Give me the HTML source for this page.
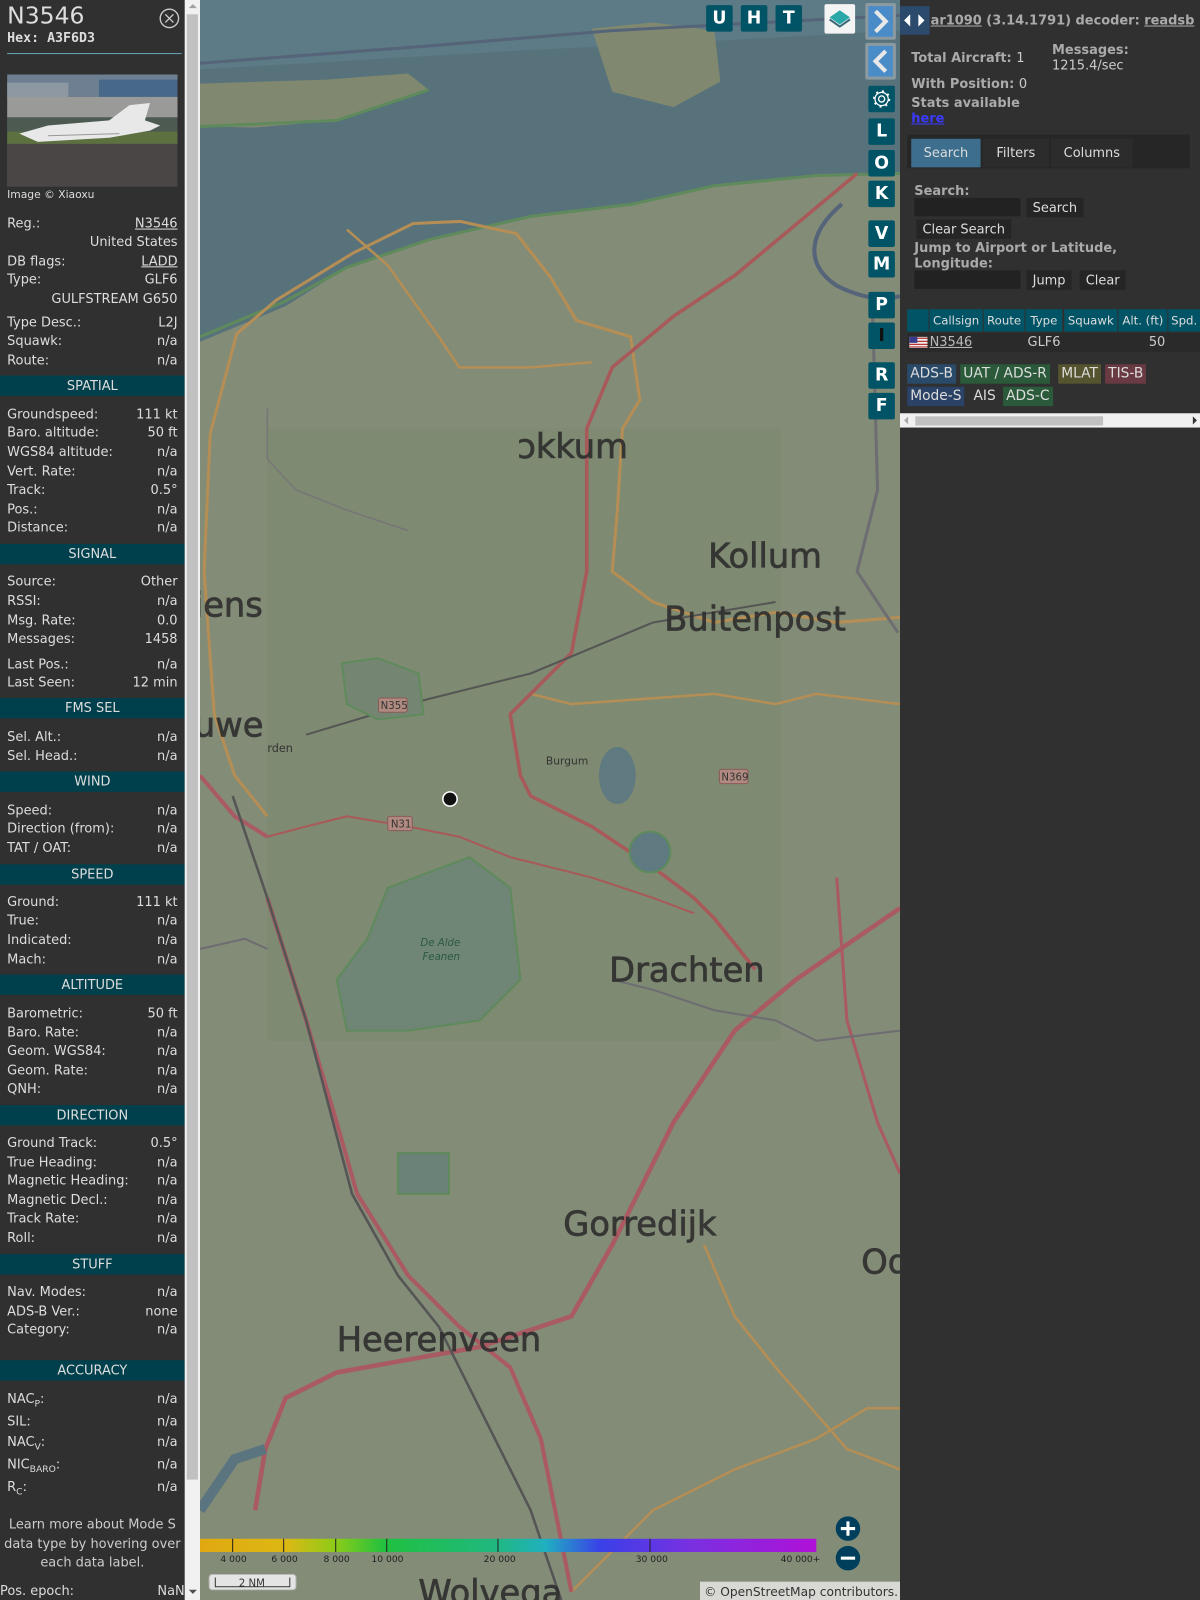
<!DOCTYPE html>
<html><head><meta charset="utf-8">
<style>
*{margin:0;padding:0;box-sizing:border-box}
html,body{width:1200px;height:1600px;overflow:hidden;background:#303030}
#w{position:absolute;left:0;top:0;width:1176px;height:1568px;transform:scale(1.020408);transform-origin:0 0;font-family:"DejaVu Sans","Liberation Sans",sans-serif;font-size:12.7px;color:#ddd}
.a{position:absolute}
#lp{left:0;top:0;width:181px;height:1568px;background:#303030;overflow:hidden}
.r{position:absolute;left:7px;width:167px;height:17px;line-height:17px;white-space:nowrap}
.r b{font-weight:normal;position:absolute;right:0;top:0}
.h{position:absolute;left:0;width:181px;height:20px;line-height:20px;background:#00404c;text-align:center}
u{text-decoration:underline}
#sb{left:181px;top:0;width:15px;height:1568px;background:#f1f1f1}
#map{left:196px;top:0;width:686px;height:1568px;background:#838c77;overflow:hidden}
.btn{position:absolute;width:26px;height:26px;background:#005466;color:#fff;font-weight:bold;font-size:17px;text-align:center;line-height:26px;border-radius:2px}
#rp{left:882px;top:0;width:294px;height:1568px;background:#303030}
.bt{position:absolute;background:#252525;color:#ddd;height:19px;line-height:19px;padding:0 6px;font-size:12.7px}
.inp{position:absolute;background:#222;height:18px;width:104px}
.th{position:absolute;top:303px;height:22px;line-height:22px;background:#005466;color:#ddd;text-align:center;font-size:11.5px}
.bd{position:absolute;height:19px;line-height:19px;padding:0 3px;font-size:13.5px}
.big{font-family:"DejaVu Sans",sans-serif;font-size:33px;fill:#2e2e2e;stroke:#2e2e2e;stroke-width:0.7;opacity:.9}
.sm{font-family:"DejaVu Sans",sans-serif;font-size:10px;fill:#333}
</style></head><body><div id="w">

<div id="lp" class="a">
 <div class="a" style="left:7px;top:3px;font-size:23px;color:#ddd">N3546</div>
 <div class="a" style="left:7px;top:30px;font-family:'DejaVu Sans Mono',monospace;font-weight:bold;font-size:13px">Hex: A3F6D3</div>
 <svg class="a" style="left:156px;top:8px" width="20" height="20"><circle cx="10" cy="10" r="9" fill="none" stroke="#ccc" stroke-width="1.3"/><path d="M6 6L14 14M14 6L6 14" stroke="#ccc" stroke-width="1.3"/></svg>
 <div class="a" style="left:7px;top:52px;width:171px;height:1px;background:#6aa6b8"></div>
 <svg class="a" style="left:7px;top:73px" width="167" height="110">
  <rect width="167" height="110" fill="#5b6066"/>
  <rect width="167" height="22" fill="#6d7f90"/>
  <rect y="8" x="0" width="60" height="16" fill="#8d98a3"/><rect y="5" x="90" width="77" height="18" fill="#48688a"/>
  <rect y="22" width="167" height="20" fill="#9a9a98"/>
  <rect y="42" width="167" height="14" fill="#4d5a52"/>
  <rect y="56" width="167" height="12" fill="#5d7040"/>
  <rect y="68" width="167" height="42" fill="#494645"/>
  <path d="M12 58 L40 50 L100 45 L120 30 L140 28 L135 45 L150 50 L140 55 L100 62 L30 66 Z" fill="#e8e8e8"/>
  <path d="M40 60 L110 58" stroke="#999" stroke-width="1"/>
 </svg>
 <div class="a" style="left:7px;top:185px;font-size:10.5px">Image © Xiaoxu</div>

 <div class="r" style="top:210px">Reg.:<b><u>N3546</u></b></div>
 <div class="r" style="top:228px"><b>United States</b></div>
 <div class="r" style="top:247px">DB flags:<b><u>LADD</u></b></div>
 <div class="r" style="top:265px">Type:<b>GLF6</b></div>
 <div class="r" style="top:284px"><b>GULFSTREAM G650</b></div>
 <div class="r" style="top:307px">Type Desc.:<b>L2J</b></div>
 <div class="r" style="top:325px">Squawk:<b>n/a</b></div>
 <div class="r" style="top:344px">Route:<b>n/a</b></div>
 <div class="h" style="top:368px">SPATIAL</div>
 <div class="r" style="top:397px">Groundspeed:<b>111 kt</b></div>
 <div class="r" style="top:415px">Baro. altitude:<b>50 ft</b></div>
 <div class="r" style="top:434px">WGS84 altitude:<b>n/a</b></div>
 <div class="r" style="top:453px">Vert. Rate:<b>n/a</b></div>
 <div class="r" style="top:471px">Track:<b>0.5°</b></div>
 <div class="r" style="top:490px">Pos.:<b>n/a</b></div>
 <div class="r" style="top:508px">Distance:<b>n/a</b></div>
 <div class="h" style="top:533px">SIGNAL</div>
 <div class="r" style="top:561px">Source:<b>Other</b></div>
 <div class="r" style="top:580px">RSSI:<b>n/a</b></div>
 <div class="r" style="top:599px">Msg. Rate:<b>0.0</b></div>
 <div class="r" style="top:617px">Messages:<b>1458</b></div>
 <div class="r" style="top:642px">Last Pos.:<b>n/a</b></div>
 <div class="r" style="top:660px">Last Seen:<b>12 min</b></div>
 <div class="h" style="top:684px">FMS SEL</div>
 <div class="r" style="top:713px">Sel. Alt.:<b>n/a</b></div>
 <div class="r" style="top:732px">Sel. Head.:<b>n/a</b></div>
 <div class="h" style="top:756px">WIND</div>
 <div class="r" style="top:785px">Speed:<b>n/a</b></div>
 <div class="r" style="top:803px">Direction (from):<b>n/a</b></div>
 <div class="r" style="top:822px">TAT / OAT:<b>n/a</b></div>
 <div class="h" style="top:847px">SPEED</div>
 <div class="r" style="top:875px">Ground:<b>111 kt</b></div>
 <div class="r" style="top:893px">True:<b>n/a</b></div>
 <div class="r" style="top:912px">Indicated:<b>n/a</b></div>
 <div class="r" style="top:931px">Mach:<b>n/a</b></div>
 <div class="h" style="top:955px">ALTITUDE</div>
 <div class="r" style="top:984px">Barometric:<b>50 ft</b></div>
 <div class="r" style="top:1003px">Baro. Rate:<b>n/a</b></div>
 <div class="r" style="top:1021px">Geom. WGS84:<b>n/a</b></div>
 <div class="r" style="top:1040px">Geom. Rate:<b>n/a</b></div>
 <div class="r" style="top:1058px">QNH:<b>n/a</b></div>
 <div class="h" style="top:1083px">DIRECTION</div>
 <div class="r" style="top:1111px">Ground Track:<b>0.5°</b></div>
 <div class="r" style="top:1130px">True Heading:<b>n/a</b></div>
 <div class="r" style="top:1148px">Magnetic Heading:<b>n/a</b></div>
 <div class="r" style="top:1167px">Magnetic Decl.:<b>n/a</b></div>
 <div class="r" style="top:1185px">Track Rate:<b>n/a</b></div>
 <div class="r" style="top:1204px">Roll:<b>n/a</b></div>
 <div class="h" style="top:1229px">STUFF</div>
 <div class="r" style="top:1257px">Nav. Modes:<b>n/a</b></div>
 <div class="r" style="top:1276px">ADS-B Ver.:<b>none</b></div>
 <div class="r" style="top:1294px">Category:<b>n/a</b></div>
 <div class="h" style="top:1333px">ACCURACY</div>
 <div class="r" style="top:1362px">NAC<sub style="font-size:9px">P</sub>:<b>n/a</b></div>
 <div class="r" style="top:1384px">SIL:<b>n/a</b></div>
 <div class="r" style="top:1404px">NAC<sub style="font-size:9px">V</sub>:<b>n/a</b></div>
 <div class="r" style="top:1426px">NIC<sub style="font-size:9px">BARO</sub>:<b>n/a</b></div>
 <div class="r" style="top:1448px">R<sub style="font-size:9px">C</sub>:<b>n/a</b></div>
 <div class="a" style="left:0;top:1485px;width:181px;text-align:center;line-height:18.5px;color:#ccc">Learn more about Mode S data type by hovering over each data label.</div>
 <div class="r" style="top:1550px;left:0;width:181px">Pos. epoch:<b>NaN</b></div>
</div>

<div id="sb" class="a">
 <div class="a" style="left:2px;top:14px;width:11px;height:1436px;background:#c1c1c1"></div>
 <div class="a" style="left:4px;top:4px;width:0;height:0;border-left:4px solid transparent;border-right:4px solid transparent;border-bottom:4px solid #a0a0a0"></div>
 <div class="a" style="left:4px;top:1558px;width:0;height:0;border-left:4px solid transparent;border-right:4px solid transparent;border-top:4px solid #505050"></div>
</div>

<div id="map" class="a">
<svg width="686" height="1568" viewBox="196 0 686 1568" style="position:absolute;left:0;top:0">
 <rect x="262" y="420" width="503" height="600" fill="#7e8a71"/>
 <path d="M196 0H882V170L800 172L700 182L620 200L520 212L420 235L340 262L280 300L196 335Z" fill="#57727b"/>
 <path d="M196 0H882V30L700 40L500 50L300 62L196 68Z" fill="#5d7b86"/>
 <path d="M196 82L320 78L400 72L420 88L330 118L250 125L196 124Z" fill="#80896f"/>
 <path d="M580 28L640 22L700 30L706 80L660 105L600 90Z" fill="#80896f"/>
 <path d="M196 330L280 295L340 262L420 235L520 212L620 200L700 182L800 172L882 170" fill="none" stroke="#5f8a5c" stroke-width="3"/>
 <path d="M196 124L330 118L420 88" fill="none" stroke="#5f8a5c" stroke-width="3"/>
 <path d="M196 62L420 45L600 30L882 15" fill="none" stroke="#56647a" stroke-width="3"/>
 <path d="M825 200C790 230 790 260 820 280C860 300 882 290 882 290" fill="none" stroke="#56647a" stroke-width="4"/>
 <path d="M206 425L232 327L271 294L346 248L405 219L451 217L506 229L539 271L565 314L618 330L627 392L610 420L605 500L600 560L640 590L700 610L760 600L820 610L882 605" fill="none" stroke="#b48e55" stroke-width="3"/>
 <path d="M206 425L200 560L210 700L230 760L262 800" fill="none" stroke="#b48e55" stroke-width="3"/>
 <path d="M340 225L380 260L430 330L450 360L520 360L580 355" fill="none" stroke="#b48e55" stroke-width="2.5"/>
 <path d="M520 680L560 690L700 680L760 690L800 680L882 690" fill="none" stroke="#b48e55" stroke-width="2.5"/>
 <path d="M690 1220L720 1290L760 1340L830 1420L882 1440" fill="none" stroke="#b48e55" stroke-width="2.5"/>
 <path d="M560 1560L640 1480L720 1440L800 1410L850 1380L882 1380" fill="none" stroke="#b48e55" stroke-width="2.5"/>
 <path d="M840 170L780 220L720 270L660 310L600 360L575 420L575 560L560 640L520 680L500 700L510 760L520 780L580 810L640 850L680 880L700 900L740 950" fill="none" stroke="#a85a5a" stroke-width="3.5"/>
 <path d="M882 890L780 960L720 1010L660 1100L600 1220L560 1290L470 1320L330 1345L280 1370L260 1420L250 1480" fill="none" stroke="#aa5a62" stroke-width="4.5"/>
 <path d="M196 760L230 800L262 820" fill="none" stroke="#aa5a62" stroke-width="4"/>
 <path d="M262 820L300 810L340 800L400 810L450 820L500 840L580 860L640 880L680 895" fill="none" stroke="#a85a5a" stroke-width="2"/>
 <path d="M262 400L262 450L290 480L340 500L400 520" fill="none" stroke="#777" stroke-width="1.5"/>
 <path d="M262 880L300 1000L330 1100L350 1170L400 1250L450 1300L500 1340L530 1410L560 1560" fill="none" stroke="#aa5a62" stroke-width="4"/>
 <path d="M820 860L830 1000L860 1100L882 1150" fill="none" stroke="#aa5a62" stroke-width="3"/>
 <path d="M228 780L262 880L300 1000L345 1170L390 1250L430 1300L470 1380L520 1480L550 1568" fill="none" stroke="#555" stroke-width="2.5"/>
 <path d="M300 720L400 690L520 660L640 610L760 590" fill="none" stroke="#555" stroke-width="2"/>
 <path d="M855 300L860 480L840 560L880 620" fill="none" stroke="#6e6e72" stroke-width="3"/>
 <path d="M196 930L240 920L262 930" fill="none" stroke="#6e6e72" stroke-width="2"/>
 <path d="M600 960L640 970L700 990L760 1000L800 1020L882 1010" fill="none" stroke="#6e6e72" stroke-width="2"/>
 <path d="M196 1480L230 1430L260 1420" fill="none" stroke="#5b7580" stroke-width="10"/>
 <ellipse cx="605" cy="760" rx="18" ry="28" fill="#5f7a80"/>
 <ellipse cx="637" cy="835" rx="20" ry="20" fill="#5f7a80" stroke="#5f8a5c" stroke-width="2"/>
 <path d="M380 870L420 855L460 840L500 870L510 960L470 1000L400 1010L340 1010L330 960L360 920Z" fill="#6f8576" stroke="#5f8a5c" stroke-width="2"/>
 <path d="M335 650L370 645L410 660L415 700L370 705L340 690Z" fill="#748672" stroke="#5f8a5c" stroke-width="2"/>
 <path d="M390 1130L440 1130L440 1170L390 1170Z" fill="#6a8278" stroke="#5f8a5c" stroke-width="2"/>
 <text x="507" y="449" class="big">ɔkkum</text>
 <text x="694" y="556" class="big">Kollum</text>
 <text x="651" y="618" class="big">Buitenpost</text>
 <text x="190" y="604" class="big">iens</text>
 <text x="190" y="722" class="big">uwe</text>
 <text x="597" y="962" class="big">Drachten</text>
 <text x="552" y="1211" class="big">Gorredijk</text>
 <text x="330" y="1324" class="big">Heerenveen</text>
 <text x="410" y="1572" class="big">Wolvega</text>
 <text x="844" y="1248" class="big">Od</text>
 <rect x="262" y="720" width="30" height="16" fill="#7e8a71"/>
 <text x="262" y="737" class="sm" style="font-size:11px">rden</text>
 <text x="535" y="749" class="sm" style="font-size:10.5px">Burgum</text>
 <rect x="371" y="684" width="28" height="14" rx="2" fill="#b08a80" stroke="#8a5a5a"/><text x="373" y="695" class="sm">N355</text>
 <rect x="380" y="800" width="24" height="14" rx="2" fill="#b08a80" stroke="#8a5a5a"/><text x="383" y="811" class="sm">N31</text>
 <rect x="705" y="754" width="28" height="14" rx="2" fill="#b08a80" stroke="#8a5a5a"/><text x="707" y="765" class="sm">N369</text>
 <text x="412" y="927" class="sm" style="font-style:italic;fill:#2d5a40">De Alde</text>
 <text x="414" y="941" class="sm" style="font-style:italic;fill:#2d5a40">Feanen</text>
 <circle cx="441" cy="783" r="7" fill="#111" stroke="#fff" stroke-width="1.5"/>
 <defs><linearGradient id="cg" x1="0" x2="1">
  <stop offset="0" stop-color="#e0a810"/><stop offset="0.14" stop-color="#dcb814"/><stop offset="0.22" stop-color="#8ccc18"/><stop offset="0.3" stop-color="#20c040"/><stop offset="0.48" stop-color="#20b880"/><stop offset="0.56" stop-color="#20b0c0"/><stop offset="0.65" stop-color="#3a40e8"/><stop offset="0.8" stop-color="#7a30e0"/><stop offset="1" stop-color="#b010d8"/>
 </linearGradient></defs>
 <rect x="196" y="1508" width="604" height="13" fill="url(#cg)"/>
 <g stroke="#222" stroke-width="1"><path d="M228 1508v13M278 1508v13M329 1508v13M379 1508v13M488 1508v13M637 1508v13"/></g>
 <g class="sm" style="font-size:9px;fill:#222"><text x="216" y="1531">4 000</text><text x="266" y="1531">6 000</text><text x="317" y="1531">8 000</text><text x="364" y="1531">10 000</text><text x="474" y="1531">20 000</text><text x="623" y="1531">30 000</text><text x="765" y="1531">40 000+</text></g>
 <rect x="205" y="1543" width="85" height="15" rx="3" fill="#e4e4e4" stroke="#bbb"/>
 <path d="M211 1546v9h73v-9" fill="none" stroke="#333"/>
 <text x="234" y="1555" class="sm" style="font-size:10px">2 NM</text>
 <circle cx="831" cy="1498" r="12" fill="#003f5c"/><path d="M824 1498h14M831 1491v14" stroke="#fff" stroke-width="3"/>
 <circle cx="831" cy="1527" r="12" fill="#003f5c"/><path d="M824 1527h14" stroke="#fff" stroke-width="3"/>
 <rect x="686" y="1550" width="196" height="18" fill="#d8d8d4"/>
 <text x="690" y="1564" class="sm" style="font-size:12px;fill:#333">© OpenStreetMap contributors.</text>
</svg>
 <div class="btn" style="left:496px;top:5px">U</div>
 <div class="btn" style="left:530px;top:5px">H</div>
 <div class="btn" style="left:564px;top:5px">T</div>
 <div class="a" style="left:612px;top:4px;width:30px;height:29px;background:#f4f4f4;border-radius:2px">
  <svg width="30" height="29"><path d="M15 6L25 13L15 20L5 13Z" fill="#2aa8a8"/><path d="M5 15L15 22L25 15" fill="none" stroke="#3a6a7a" stroke-width="2"/></svg></div>
 <div class="a" style="left:652px;top:3px;width:30px;height:36px;background:#8a9aa0;border-radius:2px"><div class="a" style="left:3px;top:3px;width:24px;height:30px;background:#4a8cc8"><svg width="24" height="30"><path d="M7 5L17 15L7 25" fill="none" stroke="#e8e8e8" stroke-width="4"/></svg></div></div>
 <div class="a" style="left:652px;top:42px;width:30px;height:36px;background:#8a9aa0;border-radius:2px"><div class="a" style="left:3px;top:3px;width:24px;height:30px;background:#4a8cc8"><svg width="24" height="30"><path d="M17 5L7 15L17 25" fill="none" stroke="#e8e8e8" stroke-width="4"/></svg></div></div>
 <div class="btn" style="left:655px;top:84px"><svg width="26" height="26"><circle cx="13" cy="13" r="3" fill="none" stroke="#fff" stroke-width="1.3"/><circle cx="13" cy="13" r="6.5" fill="none" stroke="#fff" stroke-width="1.2"/><circle cx="13" cy="13" r="7.5" fill="none" stroke="#fff" stroke-width="2" stroke-dasharray="2 3.9"/></svg></div>
 <div class="btn" style="left:655px;top:116px">L</div>
 <div class="btn" style="left:655px;top:147px">O</div>
 <div class="btn" style="left:655px;top:177px">K</div>
 <div class="btn" style="left:655px;top:216px">V</div>
 <div class="btn" style="left:655px;top:246px">M</div>
 <div class="btn" style="left:655px;top:286px">P</div>
 <div class="btn" style="left:655px;top:316px;color:#111">I</div>
 <div class="btn" style="left:655px;top:355px">R</div>
 <div class="btn" style="left:655px;top:385px">F</div>
</div>

<div id="rp" class="a">
 <div class="a" style="left:0;top:6px;width:29px;height:28px;background:#2c4a6b"><svg width="29" height="28"><path d="M4 14L10 8V20Z M24 14L18 8V20Z" fill="#fff"/></svg></div>
 <div class="a" style="left:30px;top:12px;font-weight:bold;color:#aaa;font-size:12.7px;white-space:nowrap"><u>ar1090</u> (3.14.1791) decoder: <u>readsb</u></div>
 <div class="a" style="left:11px;top:49px;font-weight:bold;color:#aaa"> Total Aircraft: <span style="font-weight:normal;color:#ccc">1</span></div>
 <div class="a" style="left:149px;top:41px;font-weight:bold;color:#aaa">Messages:</div>
 <div class="a" style="left:149px;top:56px;color:#ccc">1215.4/sec</div>
 <div class="a" style="left:11px;top:74px;font-weight:bold;color:#aaa">With Position: <span style="font-weight:normal;color:#ccc">0</span></div>
 <div class="a" style="left:11px;top:93px;font-weight:bold;color:#aaa">Stats available</div>
 <div class="a" style="left:11px;top:108px;font-weight:bold;color:#3b3bff"><u>here</u></div>
 <div class="a" style="left:7px;top:132px;width:277px;height:33px;background:#262626"></div>
 <div class="a" style="left:11px;top:136px;width:68px;height:28px;background:#3d6e8e;line-height:28px;text-align:center">Search</div>
 <div class="a" style="left:81px;top:136px;width:65px;height:28px;background:#2c2c2c;line-height:28px;text-align:center">Filters</div>
 <div class="a" style="left:148px;top:136px;width:80px;height:28px;background:#2c2c2c;line-height:28px;text-align:center">Columns</div>
 <div class="a" style="left:14px;top:179px;font-weight:bold;color:#aaa">Search:</div>
 <div class="inp" style="left:14px;top:194px"></div>
 <div class="bt" style="left:124px;top:194px">Search</div>
 <div class="bt" style="left:16px;top:215px">Clear Search</div>
 <div class="a" style="left:14px;top:235px;font-weight:bold;color:#aaa;line-height:15px">Jump to Airport or Latitude,<br>Longitude:</div>
 <div class="inp" style="left:14px;top:265px"></div>
 <div class="bt" style="left:124px;top:265px">Jump</div>
 <div class="bt" style="left:176px;top:265px">Clear</div>
 <div class="th" style="left:7px;width:21px"></div>
 <div class="th" style="left:29px;width:52px">Callsign</div>
 <div class="th" style="left:82px;width:40px">Route</div>
 <div class="th" style="left:123px;width:36px">Type</div>
 <div class="th" style="left:161px;width:52px">Squawk</div>
 <div class="th" style="left:214px;width:48px">Alt. (ft)</div>
 <div class="th" style="left:263px;width:31px">Spd.</div>
 <div class="a" style="left:7px;top:326px;width:287px;height:19px;background:#2a2a2a"></div>
 <svg class="a" style="left:9px;top:330px" width="18" height="11"><rect width="18" height="11" fill="#eee"/><path d="M0 1.5h18M0 4.5h18M0 7.5h18M0 10h18" stroke="#b33" stroke-width="1.2"/><rect width="8" height="6" fill="#3b3b8b"/></svg>
 <div class="a" style="left:29px;top:327px;color:#bbb"><u>N3546</u></div>
 <div class="a" style="left:125px;top:327px;color:#ccc">GLF6</div>
 <div class="a" style="left:240px;top:327px;color:#ccc;width:20px;text-align:right">50</div>
 <div class="bd" style="left:7px;top:357px;background:#2a4a6a">ADS-B</div>
 <div class="bd" style="left:59px;top:357px;background:#2a5a3a">UAT / ADS-R</div>
 <div class="bd" style="left:155px;top:357px;background:#56542f">MLAT</div>
 <div class="bd" style="left:201px;top:357px;background:#6a3a42">TIS-B</div>
 <div class="bd" style="left:7px;top:379px;background:#2a4266">Mode-S</div>
 <div class="bd" style="left:69px;top:379px">AIS</div>
 <div class="bd" style="left:101px;top:379px;background:#2a5a3a">ADS-C</div>
 <div class="a" style="left:0;top:405px;width:294px;height:14px;background:#f1f1f1"></div>
 <div class="a" style="left:15px;top:408px;width:184px;height:9px;background:#c1c1c1"></div>
 <div class="a" style="left:4px;top:408px;border-top:4px solid transparent;border-bottom:4px solid transparent;border-right:4px solid #aaa"></div>
 <div class="a" style="left:287px;top:408px;border-top:4px solid transparent;border-bottom:4px solid transparent;border-left:4px solid #333"></div>
</div>
</div></body></html>
